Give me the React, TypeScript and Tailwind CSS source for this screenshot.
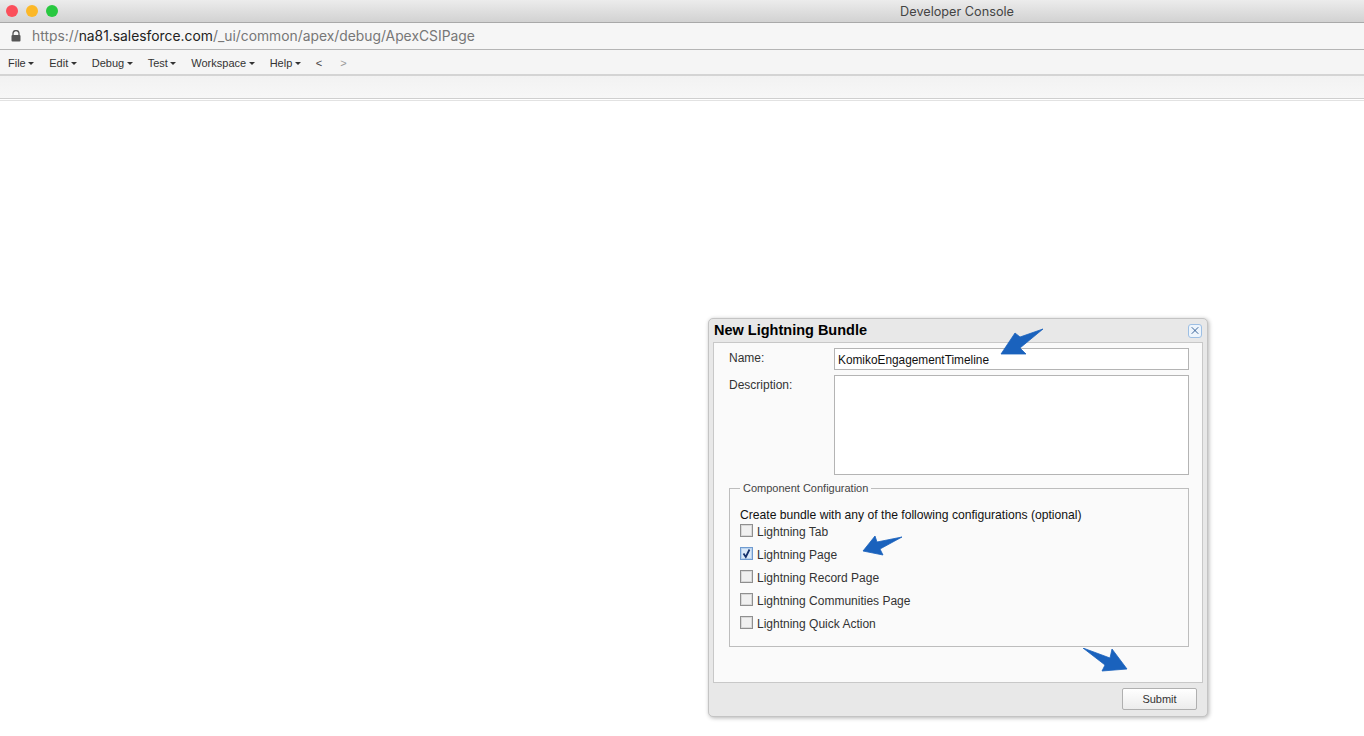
import { X } from 'lucide-react';

const MENUS = ['File', 'Edit', 'Debug', 'Test', 'Workspace', 'Help'];

const CONFIGS = [
  { label: 'Lightning Tab', checked: false },
  { label: 'Lightning Page', checked: true },
  { label: 'Lightning Record Page', checked: false },
  { label: 'Lightning Communities Page', checked: false },
  { label: 'Lightning Quick Action', checked: false },
];

// hand-drawn annotation arrows, traced from the picture
function Arrow({ className, box, d }: { className: string; box: string; d: string }) {
  return (
    <svg viewBox={box} className={className}>
      <path d={d} fill="#1a62bd" stroke="#1a62bd" strokeWidth="0.8" strokeLinejoin="round" />
    </svg>
  );
}

function MenuItem({ label }: { label: string }) {
  return (
    <span className="flex items-center gap-[2.5px]">
      {label}
      <span className="mt-[1px] h-0 w-0 border-x-[3px] border-t-[3px] border-x-transparent border-t-[#333]" />
    </span>
  );
}

export default function App() {
  return (
    <div className="relative h-[736px] w-[1364px] overflow-hidden bg-white font-['Liberation_Sans',sans-serif] text-[#333]">
      {/* window title bar */}
      <div className="flex h-[23px] items-center justify-between border-b border-[#a9a9a9] bg-gradient-to-b from-[#ececec] to-[#d2d2d2] pl-[6px] pr-[350px]">
        <div className="flex gap-[8px]">
          <span className="h-3 w-3 rounded-full bg-[#fb4f5b]" />
          <span className="h-3 w-3 rounded-full bg-[#fcb827]" />
          <span className="h-3 w-3 rounded-full bg-[#28c840]" />
        </div>
        <span className="pt-[2px] font-['Inter',sans-serif] text-[12.7px] text-[#444]">Developer Console</span>
      </div>

      {/* address bar */}
      <div className="flex h-[27px] items-center gap-[11px] border-b border-[#b5b5b5] bg-[#f6f6f6] pl-[11px] font-['Inter',sans-serif] text-[13.85px] text-[#777]">
        <svg viewBox="0 0 10 12" className="h-[12px] w-[10px]">
          <path d="M2 5.5V3.6a3 3 0 0 1 6 0V5.5" fill="none" stroke="#555" strokeWidth="1.3" />
          <rect x="0.5" y="5" width="9" height="6.5" rx="1" fill="#555" />
        </svg>
        <span>
          https://<span className="text-[#222]">na81.salesforce.com</span>/_ui/common/apex/debug/ApexCSIPage
        </span>
      </div>

      {/* menu bar */}
      <div className="flex h-[26px] items-center gap-[15px] border-b-2 border-[#d4d4d4] bg-[#f5f5f5] pl-[8px] pt-[2px] text-[11px] text-[#333]">
        {MENUS.map((m) => (
          <MenuItem key={m} label={m} />
        ))}
        <span className="text-[#444]">&lt;</span>
        <span className="ml-[3px] text-[#999]">&gt;</span>
      </div>

      {/* empty toolbar strip */}
      <div className="h-[23px] border-b border-[#cfcfcf] bg-gradient-to-b from-[#f2f2f2] to-[#f7f7f7] shadow-[0_1px_0_#fff,0_2px_0_#e2e2e2]" />

      {/* dialog */}
      <div className="absolute left-[708px] top-[318px] flex h-[399px] w-[500px] flex-col rounded-[5px] border border-[#c4c4c4] bg-[#e8e8e8] px-[4px] shadow-[1px_1px_4px_rgba(0,0,0,0.3)]">
        <div className="flex h-[23px] shrink-0 items-center justify-between pl-[1px] pr-[1px]">
          <span className="text-[14.5px] font-bold leading-none text-black">New Lightning Bundle</span>
          <span className="flex h-[14px] w-[14px] items-center justify-center rounded-[3px] border border-[#9dbfe4] bg-[#eef5fc]">
            <X className="h-[13px] w-[13px] text-[#1f4f8a]" strokeWidth={1.75} />
          </span>
        </div>

        <div className="flex h-[341px] shrink-0 flex-col border border-[#c8c8c8] bg-[#fafafa] pl-[15px] pr-[13px] pt-[5px] text-[12px]">
          <div className="flex">
            <label className="w-[105px] pt-[1px] text-[#333]">Name:</label>
            <div className="flex h-[22px] flex-1 items-center border border-[#b4b4b4] bg-white pl-[3px] pt-[3px] text-[11.85px] text-[#111]">
              KomikoEngagementTimeline
            </div>
          </div>
          <div className="mt-[5px] flex">
            <label className="w-[105px] pt-[1px] text-[#333]">Description:</label>
            <div className="h-[100px] flex-1 border border-[#b4b4b4] bg-white" />
          </div>

          <fieldset className="mt-[5px] h-[167px] border border-[#bdbdbd] pb-0 pl-[10px] pr-0">
            <legend className="px-[3px] text-[11px] text-[#444]">Component Configuration</legend>
            <p className="mt-[11px] text-[12.15px] leading-[14px] text-[#111]">
              Create bundle with any of the following configurations (optional)
            </p>
            <ul className="mt-[1px] flex flex-col gap-[5px]">
              {CONFIGS.map((c) => (
                <li key={c.label} className="flex h-[18px] items-center gap-[4px] text-[#333]">
                  <span
                    className={
                      c.checked
                        ? 'mb-[2px] flex h-[13px] w-[13px] items-center justify-center border border-[#6f9bd0] bg-[#dbe9f8] shadow-[inset_0_0_0_1px_#b9d2ee]'
                        : 'mb-[2px] h-[13px] w-[13px] border border-[#8f8f8f] bg-[#f0f0f0] shadow-[inset_0_0_0_1px_#d8d8d8]'
                    }
                  >
                    {c.checked && (
                      <svg viewBox="0 0 11 11" className="h-[11px] w-[11px]">
                        <path d="M2.5 5.5 L4.8 9 L8.5 1.5" fill="none" stroke="#14306b" strokeWidth="1.8" />
                      </svg>
                    )}
                  </span>
                  {c.label}
                </li>
              ))}
            </ul>
          </fieldset>
        </div>

        <div className="flex flex-1 items-start justify-end pr-[6px] pt-[5px]">
          <button className="h-[22px] w-[75px] rounded-[2px] border border-[#b0b0b0] bg-gradient-to-b from-white to-[#ececec] text-[11px] text-[#333]">
            Submit
          </button>
        </div>
      </div>

      {/* annotation arrows */}
      <Arrow
        className="absolute left-[1000px] top-[328px] h-[28px] w-[44px]"
        box="0 0 44 28"
        d="M43 1 L20 9 L15 5 L1 26 L26 26 L20 20 Z"
      />
      <Arrow
        className="absolute left-[862px] top-[536px] h-[20px] w-[40px]"
        box="0 0 40 20"
        d="M40 1 L15 6 L13 0 L1 15 L21 19 L18 13 Z"
      />
      <Arrow
        className="absolute left-[1083px] top-[648px] h-[24px] w-[45px]"
        box="0 0 45 24"
        d="M0 0 L27 10 L29 1 L44 21 L19 23 L22 17 Z"
      />
    </div>
  );
}
